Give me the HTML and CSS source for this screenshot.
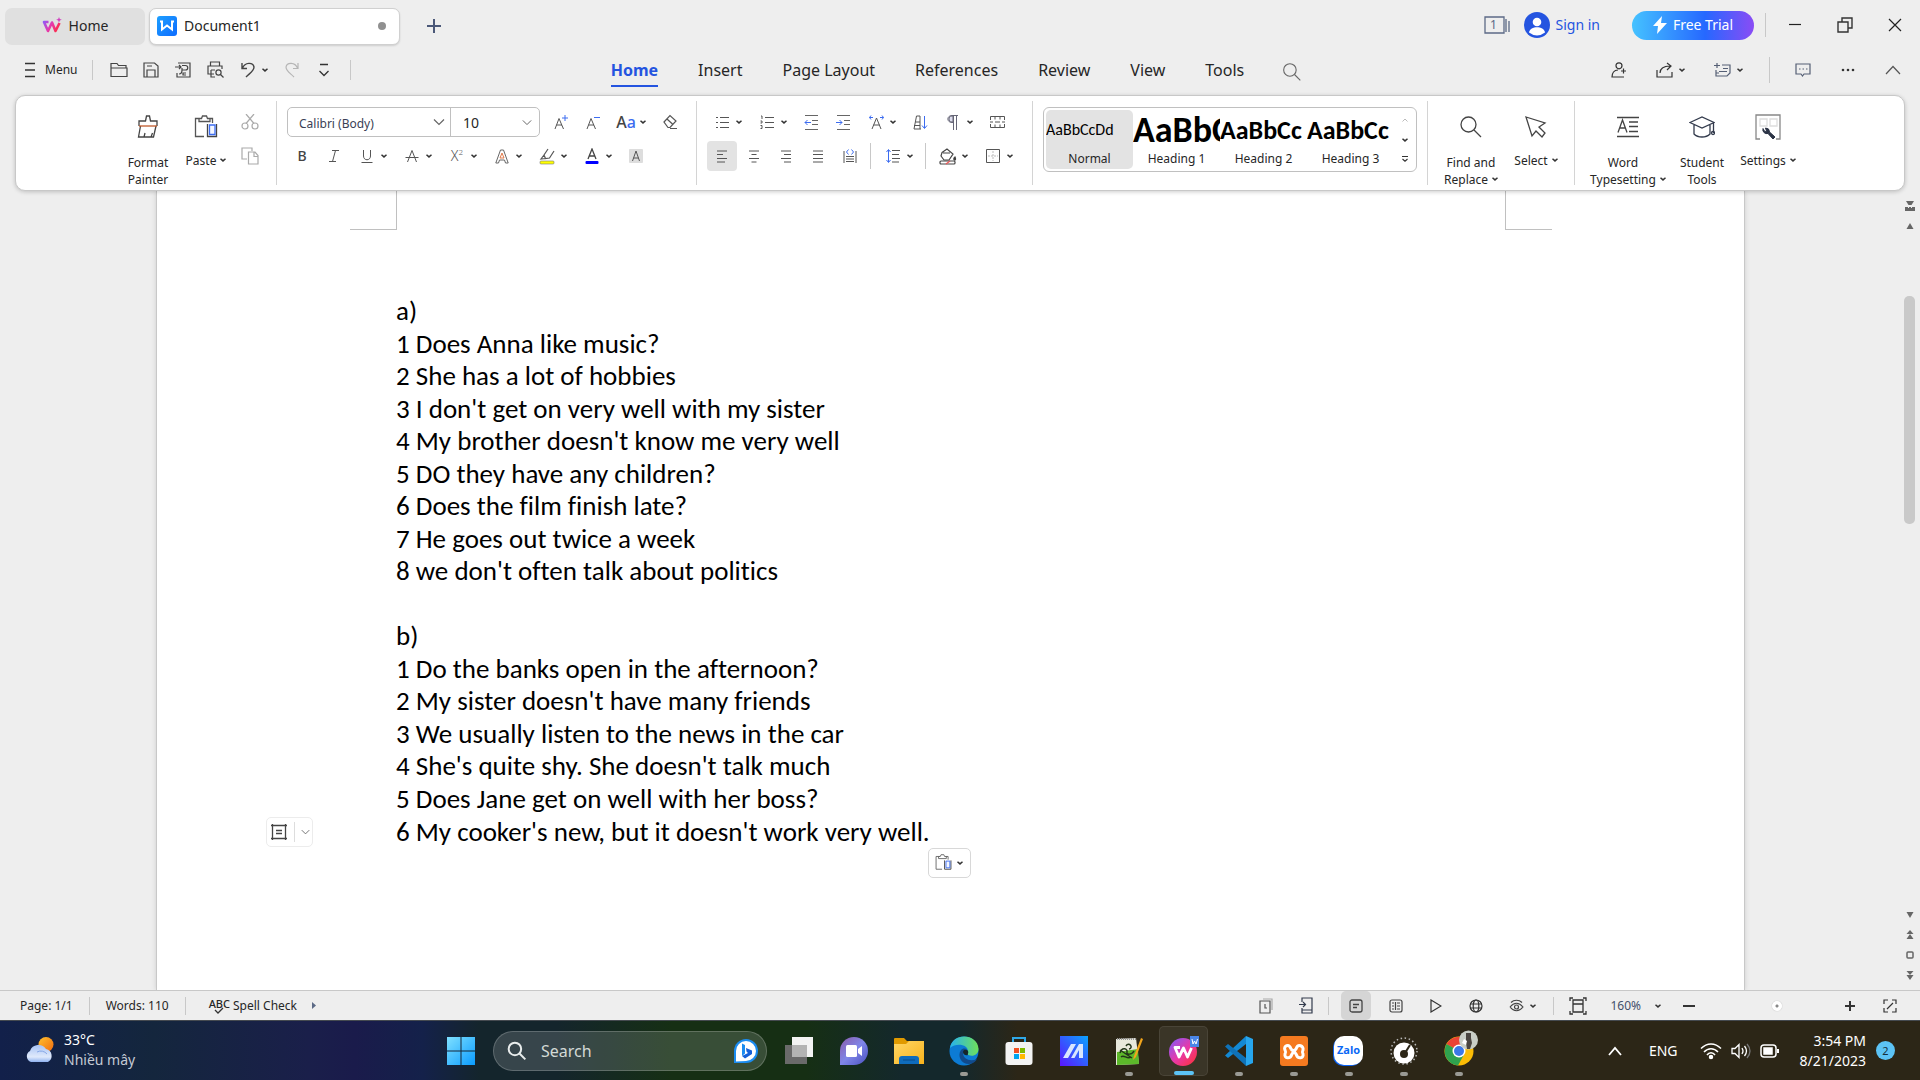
FILE: index.html
```html
<!DOCTYPE html>
<html lang="en">
<head>
<meta charset="utf-8">
<title>Document1</title>
<link rel="stylesheet" href="styles.css">
</head>
<body>
<svg class="defs" aria-hidden="true">
  <defs>
    <linearGradient id="gW" x1="0" y1="0" x2="1" y2="1"><stop offset="0" stop-color="#7a5cff"/><stop offset=".5" stop-color="#e839a8"/><stop offset="1" stop-color="#ff3030"/></linearGradient>
    <linearGradient id="gWb" gradientUnits="userSpaceOnUse" x1="1" y1="4" x2="17" y2="14"><stop offset="0" stop-color="#8a5cff"/><stop offset=".5" stop-color="#e839a8"/><stop offset="1" stop-color="#ff2a3a"/></linearGradient>
    <linearGradient id="gDoc" x1="0" y1="0" x2="1" y2="1"><stop offset="0" stop-color="#1ea0ff"/><stop offset="1" stop-color="#0d6bff"/></linearGradient>
    <linearGradient id="gWin" x1="0" y1="0" x2="1" y2="1"><stop offset="0" stop-color="#7fe0ff"/><stop offset="1" stop-color="#0a9bff"/></linearGradient>
    <linearGradient id="gSun" x1="0" y1="0" x2="1" y2="1"><stop offset="0" stop-color="#ffc12e"/><stop offset="1" stop-color="#f06a10"/></linearGradient>
    <linearGradient id="gCloud" x1="0" y1="0" x2="0" y2="1"><stop offset="0" stop-color="#a9c4f5"/><stop offset=".7" stop-color="#dfe9fb"/><stop offset="1" stop-color="#8fb2f0"/></linearGradient>
    <linearGradient id="gEdge" x1="0" y1="0" x2="1" y2="0"><stop offset="0" stop-color="#27b2ee"/><stop offset="1" stop-color="#6fe05a"/></linearGradient>
    <linearGradient id="gA" x1="0" y1="1" x2="1" y2="0"><stop offset="0" stop-color="#5a14ff"/><stop offset="1" stop-color="#0aa4ff"/></linearGradient>
    <linearGradient id="gChat" x1="0" y1="0" x2="1" y2="1"><stop offset="0" stop-color="#8c5aa8"/><stop offset=".5" stop-color="#7f86e8"/><stop offset="1" stop-color="#4a50c0"/></linearGradient>
    <linearGradient id="gFold" x1="0" y1="0" x2="1" y2="1"><stop offset="0" stop-color="#ffd766"/><stop offset="1" stop-color="#f9b31c"/></linearGradient>
    <symbol id="chev" viewBox="0 0 6 4"><path d="M.5.7 3 2.9 5.500.7" fill="none" stroke="#333" stroke-width="1.500"/></symbol>
    <symbol id="chevL" viewBox="0 0 12 8"><path d="M1 1.500 6 6.500 11 1.500" fill="none" stroke="#666" stroke-width="1.200"/></symbol>
    <symbol id="lens" viewBox="0 0 24 24"><circle cx="9.500" cy="9.500" r="7.500"/><path d="m15 15 7 7"/></symbol>
    <symbol id="clip" viewBox="0 0 24 24"><path d="M7 3.500H1.500v18H10M15 3.500h3.500V8M5 6.500V3.500h2.500L8.500 1h4l1 2.500H16v3z"/><path d="M13.500 9v12.500h9V9" stroke="#444"/><path d="M15.500 10h5.500v9.500h-5.500z" stroke="#3c6cf0" stroke-width="1.300" fill="#f3f6ff"/></symbol>
  </defs>
</svg>

<header class="titlebar">
  <button class="tab">
    <svg width="20" height="18" viewBox="0 0 20 18"><path d="M6.500 5H2l4 9 4-8.500L13.500 14 17.500 6" fill="none" stroke="url(#gWb)" stroke-width="2.600" stroke-linejoin="round"/><path d="m17 0 .8 2 2 .7-2 .8-.8 2-.8-2-2-.8 2-.7z" fill="#d040c0"/></svg>
    <span>Home</span>
  </button>
  <button class="tab tab-doc">
    <svg width="20" height="20" viewBox="0 0 20 20"><rect width="20" height="20" rx="3" fill="url(#gDoc)"/><path d="M3 5.500h2v8l5-4 5 4v-8h2" fill="none" stroke="#fff" stroke-width="2"/></svg>
    <span>Document1</span><i class="dot"></i>
  </button>
  <button class="plus" aria-label="New tab"><svg width="16" height="16" viewBox="0 0 16 16"><path d="M8 1v14M1 8h14" stroke="#4b5878" stroke-width="2"/></svg></button>
  <div class="title-right">
    <button aria-label="Windows" class="winlist"><svg width="26" height="18" viewBox="0 0 26 18" fill="none" stroke="#5c6a86" stroke-width="1.300"><path d="M1 1h19v16H1zM22 3v13M25 5v11"/></svg><span>1</span></button>
    <button class="signin"><svg width="26" height="26" viewBox="0 0 26 26"><circle cx="13" cy="13" r="13" fill="#2454e0"/><circle cx="13" cy="10" r="4.300" fill="#fff"/><path d="M5 20.500c1-7 15-7 16 0q-8 6-16 0" fill="#fff"/></svg><span>Sign in</span></button>
    <button class="trial"><svg width="14" height="18" viewBox="0 0 14 18"><path d="M9 0 0 10h5l-1 8L14 7H8z" fill="#fff"/></svg><span>Free Trial</span></button>
    <i class="vr"></i>
    <button class="win" aria-label="Minimize"><svg width="14" height="14" viewBox="0 0 14 14"><path d="M1 6.500h12" stroke="#222" stroke-width="1.200"/></svg></button>
    <button class="win" aria-label="Restore"><svg width="16" height="16" viewBox="0 0 16 16" fill="none" stroke="#333" stroke-width="1.400"><path d="M1 5h10v10H1zM5 5V1h10v10h-4"/></svg></button>
    <button class="win" aria-label="Close"><svg width="14" height="14" viewBox="0 0 14 14"><path d="m1 1 12 12M13 1 1 13" stroke="#222" stroke-width="1.200"/></svg></button>
  </div>
</header>

<div class="menubar">
  <div class="quick">
    <button class="menu"><svg width="12" height="16" viewBox="0 0 12 16"><path d="M1 1.500h10M1 8h10M1 14.500h10" stroke="#333" stroke-width="1.300"/></svg><span>Menu</span></button>
    <i class="vr"></i>
    <button class="ib" aria-label="Open"><svg width="18" height="16" viewBox="0 0 18 16" fill="none" stroke="#444" stroke-width="1.200"><path d="M1 14.500V1.500h6l1.500 2H16V6M1 6h16v8.500H1z"/></svg></button>
    <button class="ib" aria-label="Save"><svg width="16" height="16" viewBox="0 0 16 16" fill="none" stroke="#444" stroke-width="1.200"><path d="M1 1h10.500L15 4v11H1zM4 15V8h8v7M4 4h5"/></svg></button>
    <button class="ib" aria-label="Export"><svg width="16" height="16" viewBox="0 0 16 16" fill="none" stroke="#444" stroke-width="1.200"><path d="M3 1h12v14H2v-4M0 5h6M4 3l2 2-2 2M7 3.500h3.500a2 2 0 0 1 0 4.500H7v-2M7 8c0 3-1 4-3 4M11 11H8v2h3"/></svg></button>
    <button class="ib" aria-label="Print preview"><svg width="17" height="17" viewBox="0 0 17 17" fill="none" stroke="#444" stroke-width="1.200"><path d="M3.500 5V1h9v4M7 13H1V5h14v3M4 9v7h4M4 9h4"/><circle cx="11.500" cy="11.500" r="2.600"/><path d="m13.500 13.500 3 3"/></svg></button>
    <button class="dd" aria-label="Undo"><svg width="14" height="16" viewBox="0 0 14 16" fill="none" stroke="#444" stroke-width="1.400"><path d="M1 1v5.500h5M1.500 6C4 0 12 0 13 5c0 4-4 6-8 10"/></svg><svg class="c"><use href="#chev"/></svg></button>
    <button class="ib" aria-label="Redo"><svg width="14" height="16" viewBox="0 0 14 16" fill="none" stroke="#b5b5b5" stroke-width="1.200"><path d="M13 1v5.500H8M12.500 6C10 0 2 0 1 5c0 4 4 6 8 10"/></svg></button>
    <button class="ib" aria-label="Customize"><svg width="12" height="14" viewBox="0 0 12 14" fill="none" stroke="#333" stroke-width="1.300"><path d="M2 1.500h8M1.500 8 6 12.500 10.500 8"/></svg></button>
    <i class="vr"></i>
  </div>
  <nav class="tabs">
    <a href="#" class="on">Home</a><a href="#">Insert</a><a href="#">Page Layout</a><a href="#">References</a><a href="#">Review</a><a href="#">View</a><a href="#">Tools</a>
    <button aria-label="Search"><svg width="20" height="20" class="ln" stroke="#666"><use href="#lens"/></svg></button>
  </nav>
  <div class="share">
    <button class="ib" aria-label="Invite"><svg width="16" height="16" viewBox="0 0 16 16" fill="none" stroke="#333" stroke-width="1.200"><circle cx="8" cy="3.800" r="3"/><path d="M7 8c-4 0-6 3-6 7h12M12.500 6.500v5M10 9h5"/></svg></button>
    <button class="dd" aria-label="Share"><svg width="18" height="16" viewBox="0 0 18 16" fill="none" stroke="#333" stroke-width="1.200"><path d="M1 8v7h15v-5M4 11c0-5 4-7 10-7M11 1l4 3-4 4"/></svg><svg class="c"><use href="#chev"/></svg></button>
    <button class="dd" aria-label="Add panel"><svg width="18" height="16" viewBox="0 0 18 16" fill="none" stroke="#555f75" stroke-width="1.200"><path d="M3 1v5M0 3.500h6M8 3h8v8l-3 3H2V8M9 6.500h5M5 9.500h8M2 11h3"/></svg><svg class="c"><use href="#chev"/></svg></button>
    <i class="vr"></i>
    <button class="ib" aria-label="Comments"><svg width="16" height="14" viewBox="0 0 16 14" fill="none" stroke="#555f75" stroke-width="1.200"><path d="M1 1h14v10H9l-1.500 2L6 11H1zM4 6h1.500M7.500 6H9M11 6h1.500"/></svg></button>
    <button class="ib" aria-label="More"><svg width="14" height="4" viewBox="0 0 14 4" fill="#333"><circle cx="2" cy="2" r="1.300"/><circle cx="7" cy="2" r="1.300"/><circle cx="12" cy="2" r="1.300"/></svg></button>
    <button class="ib" aria-label="Collapse ribbon"><svg width="16" height="10" viewBox="0 0 16 10" fill="none" stroke="#555" stroke-width="1.200"><path d="m1 9 7-7.500L15 9"/></svg></button>
  </div>
</div>

<section class="ribbon">
  <div class="group clipboard">
    <button class="big two painter"><svg width="22" height="24" viewBox="0 0 22 24" fill="none" stroke="#444" stroke-width="1.300"><path d="M2 11V6h6.500l1-5h3l1 5H20v5M3.500 11 1.500 22h15l2.500-11M7 22l1-4M14 22l1.500-4"/><path d="M2 11h18" stroke="#c0592a"/></svg><span>Format<br>Painter</span></button>
    <button class="big paste"><svg width="24" height="24" class="ln" stroke="#555"><use href="#clip"/></svg><span>Paste<svg class="c"><use href="#chev"/></svg></span></button>
    <div class="rows">
      <div class="row"><button class="ib" aria-label="Cut"><svg width="18" height="16" viewBox="0 0 18 16" fill="none" stroke="#aaa" stroke-width="1.200"><circle cx="4" cy="12" r="3"/><circle cx="14" cy="12" r="3"/><path d="M5 9.500 13 0M13 9.500 5 0"/></svg></button></div>
      <div class="row"><button class="ib" aria-label="Copy"><svg width="18" height="18" viewBox="0 0 18 18" fill="none" stroke="#aaa" stroke-width="1.200"><path d="M6 12H1V1h10v3M7.500 5H14l3 3.500V17H7.500zM13 5v4.500h4"/></svg></button></div>
    </div>
  </div>
  <div class="group font">
    <div class="rows">
      <div class="row">
        <div class="combo"><input class="fname" aria-label="Font" value="Calibri (Body)"><svg width="12" height="8"><use href="#chevL"/></svg><input class="fsize" aria-label="Font size" value="10"><svg width="10" height="7"><use href="#chevL"/></svg></div>
        <button class="ib" aria-label="Grow font"><svg width="16" height="16" viewBox="0 0 16 16" fill="none" stroke="#555"><path d="m2 15 4-10.500L10.500 15M3.500 11h5.500"/><path d="M12 1v6M9 4h6" stroke="#3c6cf0"/></svg></button>
        <button class="ib" aria-label="Shrink font"><svg width="16" height="16" viewBox="0 0 16 16" fill="none" stroke="#555"><path d="m2 15 4-10.500L10.500 15M3.500 11h5.500"/><path d="M9 3.500h6" stroke="#3c6cf0"/></svg></button>
        <button class="dd" aria-label="Change case"><span class="case">A<em>a</em></span><svg class="c"><use href="#chev"/></svg></button>
        <button class="ib" aria-label="Clear formatting"><svg width="16" height="16" viewBox="0 0 16 16" fill="none" stroke="#555" stroke-width="1.200"><path d="m2 8 6-6.500L14 7l-6 6.500H6zM5 5l6 5.500M8 14.500h7"/></svg></button>
      </div>
      <div class="row">
        <button class="ib t" aria-label="Bold"><b>B</b></button>
        <button class="ib t" aria-label="Italic"><svg width="12" height="12" viewBox="0 0 12 12" fill="none" stroke="#555"><path d="M4 .5h7M1 11.500h7M7.500.5l-3 11"/></svg></button>
        <button class="dd" aria-label="Underline"><svg width="12" height="15" viewBox="0 0 12 15" fill="none" stroke="#555"><path d="M2.500 1v6c0 5 7 5 7 0V1M.5 13.500h11"/></svg><svg class="c"><use href="#chev"/></svg></button>
        <button class="dd" aria-label="Strikethrough"><svg width="14" height="14" viewBox="0 0 14 14" fill="none" stroke="#555"><path d="M2.500 13 7 1.500 11.500 13M.5 8.500h13"/></svg><svg class="c"><use href="#chev"/></svg></button>
        <button class="dd" aria-label="Superscript"><span class="sup">X<sup>2</sup></span><svg class="c"><use href="#chev"/></svg></button>
        <button class="dd" aria-label="Text effects"><svg width="14" height="15" viewBox="0 0 14 15" fill="none" stroke="#666"><path d="M.8 14 5.500 1h3l4.700 13h-2.700l-1-3h-5l-1 3z"/><path d="m5 9 2-5 2 5z" stroke="#e07a4a"/></svg><svg class="c"><use href="#chev"/></svg></button>
        <button class="dd" aria-label="Highlight"><svg width="16" height="17" viewBox="0 0 16 17" fill="none" stroke="#555" stroke-width="1.200"><path d="M9 1 5 7l1.500 3.500 4-.5L15 3M5 7l-3 4 4.500-.5"/><rect x="1" y="13" width="14" height="3" rx="1" fill="#ff0" stroke="#777" stroke-width=".6"/></svg><svg class="c"><use href="#chev"/></svg></button>
        <button class="dd" aria-label="Font color"><svg width="14" height="17" viewBox="0 0 14 17" fill="none" stroke="#444" stroke-width="1.300"><path d="M3 11 7 1l4 10M4.500 8h5"/><rect x=".5" y="13" width="13" height="3" rx="1" fill="#00f" stroke="none"/></svg><svg class="c"><use href="#chev"/></svg></button>
        <button class="ib" aria-label="Character shading"><svg width="16" height="16" viewBox="0 0 16 16" fill="none" stroke="#555"><rect x="1" y="1" width="14" height="14" rx="1" fill="#ddd" stroke="none"/><path d="M4.500 13 8 3l3.500 10M5.500 10h5"/></svg></button>
      </div>
    </div>
  </div>
  <div class="group para">
    <div class="rows">
      <div class="row">
        <button class="dd" aria-label="Bullets"><svg width="14" height="14" viewBox="0 0 14 14" stroke="#555"><path d="M1 2.500h2M1 7.500h2M1 12.500h2M5 2.500h9M5 7.500h9M5 12.500h9"/></svg><svg class="c"><use href="#chev"/></svg></button>
        <button class="dd" aria-label="Numbering"><svg width="14" height="15" viewBox="0 0 14 15" fill="none" stroke="#555"><path d="M1 1h1v3M.5 6H2v2H.5M.5 10.500H2v3H.5M5 2.500h9M5 7.500h9M5 12.500h9"/></svg><svg class="c"><use href="#chev"/></svg></button>
        <button class="ib" aria-label="Decrease indent"><svg width="14" height="15" viewBox="0 0 14 15" fill="none" stroke="#666"><path d="M1 .5h13M8 5.500h6M8 9.500h6M1 14.500h13"/><path d="M7 7.500H1M3.500 5 1 7.500 3.500 10" stroke="#3c6cf0"/></svg></button>
        <button class="ib" aria-label="Increase indent"><svg width="14" height="15" viewBox="0 0 14 15" fill="none" stroke="#666"><path d="M1 .5h13M8 5.500h6M8 9.500h6M1 14.500h13"/><path d="M0 7.500h6M3.500 5 6 7.500 3.500 10" stroke="#3c6cf0"/></svg></button>
        <button class="dd" aria-label="Asian layout"><svg width="15" height="15" viewBox="0 0 15 15" fill="none" stroke="#555"><path d="M3 14 7.500 3 12 14M4.500 10h6"/><path d="M4 2.500H.5M2 .5l-1.500 2 1.500 2M11 2.500h3.500M13 .5l1.500 2-1.500 2" stroke="#3c6cf0"/></svg><svg class="c"><use href="#chev"/></svg></button>
        <button class="ib" aria-label="Sort"><svg width="15" height="15" viewBox="0 0 15 15" fill="none" stroke="#555"><path d="M3.500 1H7v13M3.500 1 1 14M2.500 7H7M1 10.500h6M1 14h7"/><path d="M11.500 1v12M9 10.500l2.500 3 2.500-3" stroke="#3c6cf0"/></svg></button>
        <button class="dd" aria-label="Show marks"><svg width="12" height="15" viewBox="0 0 12 15" fill="none" stroke="#667"><path d="M11 .5H5c-5.500 0-5.500 7 0 7h1M6.500.5V15M9.500.5V15"/><path d="M6 1H5C1 1 1 7 5 7h1z" fill="#dde"/></svg><svg class="c"><use href="#chev"/></svg></button>
        <button class="ib" aria-label="Tabs"><svg width="15" height="12" viewBox="0 0 15 12" fill="none" stroke="#555"><path d="M.5 4V.5h14V4M.5 8v3.500h14V8M5 .5v3M10 .5v3M5 8.500v3M10 8.500v3M0 6h3M5 6h5M12 6h3"/></svg></button>
      </div>
      <div class="row">
        <button class="ib on" aria-label="Align left"><svg width="12" height="13" viewBox="0 0 12 13" stroke="#555"><path d="M1 1h10M1 4.500h6M1 8.500h10M1 12h8"/></svg></button>
        <button class="ib" aria-label="Center"><svg width="12" height="13" viewBox="0 0 12 13" stroke="#555"><path d="M1 1h10M3.500 4.500h5M1 8.500h10M3.500 12h5"/></svg></button>
        <button class="ib" aria-label="Align right"><svg width="12" height="13" viewBox="0 0 12 13" stroke="#555"><path d="M1 1h10M4 4.500h7M1 8.500h10M4 12h7"/></svg></button>
        <button class="ib" aria-label="Justify"><svg width="12" height="13" viewBox="0 0 12 13" stroke="#555"><path d="M1 1h10M1 4.500h10M1 8.500h10M1 12h10"/></svg></button>
        <button class="ib" aria-label="Distribute"><svg width="14" height="14" viewBox="0 0 14 14" fill="none" stroke="#555"><path d="M1 2v12M13 2v12M3 7.500h8M3 12.500h8M3 10h8"/><path d="M5.500.5 3.500 3l2 2.500M8.500.5l2 2.500-2 2.500" stroke="#3c6cf0"/></svg></button>
        <i class="vr"></i>
        <button class="dd" aria-label="Line spacing"><svg width="14" height="14" viewBox="0 0 14 14" fill="none" stroke="#555"><path d="M6 1.500h8M6 5.500h7M6 9.500h8M6 13h7"/><path d="M2.500 1v12M.5 3l2-2.500 2 2.500M.5 11l2 2.500 2-2.500" stroke="#3c6cf0"/></svg><svg class="c"><use href="#chev"/></svg></button>
        <i class="vr"></i>
        <button class="dd" aria-label="Shading"><svg width="18" height="17" viewBox="0 0 18 17" fill="none" stroke="#444" stroke-width="1.200"><path d="M3 4.500 8 1l6 5-4 6H5L2 8zM4 5h7"/><path d="M16 9c2 4-2 4-1 1z" fill="#333"/><rect x="1" y="13" width="15" height="3" rx="1"/><path d="m7 16 4-3" stroke="#e55"/></svg><svg class="c"><use href="#chev"/></svg></button>
        <button class="dd" aria-label="Borders"><svg width="14" height="14" viewBox="0 0 14 14" fill="none" stroke="#555"><path d="M.5.5h13v13H.5z"/><path d="M7 2v10M2 7h10" stroke="#bbb" stroke-dasharray="2 1"/></svg><svg class="c"><use href="#chev"/></svg></button>
      </div>
    </div>
  </div>
  <div class="group styles">
    <div class="gallery">
      <button class="style on"><span class="s0">AaBbCcDd</span><small>Normal</small></button>
      <button class="style"><span class="s1">AaBbC</span><small>Heading 1</small></button>
      <button class="style"><span class="s2">AaBbCc</span><small>Heading 2</small></button>
      <button class="style"><span class="s3">AaBbCc</span><small>Heading 3</small></button>
      <div class="gscroll">
        <button aria-label="Previous styles"><svg width="6" height="4" viewBox="0 0 6 4"><path d="m.5 3.500 2.500-2.500 2.500 2.500" fill="none" stroke="#bbb"/></svg></button>
        <button aria-label="Next styles"><svg class="c"><use href="#chev"/></svg></button>
        <button aria-label="All styles"><svg width="6" height="6" viewBox="0 0 6 6"><path d="M0 .5h6M.5 3 3 5.200 5.500 3" fill="none" stroke="#333" stroke-width="1.100"/></svg></button>
      </div>
    </div>
  </div>
  <div class="group editing">
    <button class="big two"><svg width="24" height="24" class="ln" stroke="#444"><use href="#lens"/></svg><span>Find and<br>Replace<svg class="c"><use href="#chev"/></svg></span></button>
    <button class="big sel"><svg width="22" height="22" viewBox="0 0 22 22" fill="none" stroke="#444" stroke-width="1.300"><path d="m1 1 19 6-6 4 6 6-3 4-6-6-4 5z"/></svg><span>Select<svg class="c"><use href="#chev"/></svg></span></button>
  </div>
  <div class="group tools">
    <button class="big two"><svg width="24" height="22" viewBox="0 0 24 22" fill="none" stroke="#444" stroke-width="1.300"><path d="M1 1.500h22M1 20.500h22M13 6h9M13 10.500h9M13 15.500h9M2 16.500 6.500 4 11 16.500M3.500 12h6"/></svg><span><span class="lead">Word</span>Typesetting<svg class="c"><use href="#chev"/></svg></span></button>
    <button class="big two"><svg width="26" height="22" viewBox="0 0 26 22" fill="none" stroke="#333b4d" stroke-width="1.300"><path d="M1 6.500 13 1l12 5.500L13 12zM5 9v9c4 4 12 4 16 0V9M24.500 7v10"/><circle cx="24" cy="17" r="1.500"/></svg><span>Student<br>Tools</span></button>
    <button class="big"><svg width="26" height="26" viewBox="0 0 26 26" fill="none" stroke="#888" stroke-width="1.300"><path d="M5 25H1V1h24v24h-4"/><path d="M5 5h7v7H5zM15 5h7v7h-7z" stroke="#ddd"/><path d="M8 14.500a4 4 0 0 0 5 5l5 5.500 2-2-5.500-5a4 4 0 0 0-4-4l1 3-1.500 1z" fill="#2b3345" stroke="#2b3345" stroke-width="1"/></svg><span>Settings<svg class="c"><use href="#chev"/></svg></span></button>
  </div>
</section>

<main class="work">
  <article class="page">
    <div class="marks"><i class="ml"></i><i class="mr"></i></div>
    <div class="text">
      <p>a)</p>
      <p>1 Does Anna like music?</p>
      <p>2 She has a lot of hobbies</p>
      <p>3 I don't get on very well with my sister</p>
      <p>4 My brother doesn't know me very well</p>
      <p>5 DO they have any children?</p>
      <p>6 Does the film finish late?</p>
      <p>7 He goes out twice a week</p>
      <p>8 we don't often talk about politics</p>
      <p>&nbsp;</p>
      <p>b)</p>
      <p>1 Do the banks open in the afternoon?</p>
      <p>2 My sister doesn't have many friends</p>
      <p>3 We usually listen to the news in the car</p>
      <p>4 She's quite shy. She doesn't talk much</p>
      <p>5 Does Jane get on well with her boss?</p>
      <p class="last">6 My cooker's new, but it doesn't work very well.
        <button class="float pmark" aria-label="Paragraph layout"><svg width="18" height="18" viewBox="0 0 18 18" fill="none" stroke="#444" stroke-width="1.300"><path d="M2.500 1v16M15.500 1v16M1 2.500h16M1 15.500h16M6 7.500h6M6 10.500h6"/></svg><i class="vr"></i><svg width="9" height="6"><use href="#chevL"/></svg></button>
        <button class="float pbtn" aria-label="Paste options"><svg width="17" height="17" class="ln" stroke="#666"><use href="#clip"/></svg><svg class="c"><use href="#chev"/></svg></button>
      </p>
    </div>
  </article>
  <aside class="rail">
    <button aria-label="Ruler"><svg width="10" height="10" viewBox="0 0 10 10" fill="#666"><path d="M1 0h8L6.500 4h-3zM0 10V6h3v1h1V6h2v1h1V6h3v4z"/></svg></button>
    <button aria-label="Scroll up"><svg width="8" height="8" viewBox="0 0 8 8" fill="#666"><path d="m4 1 3.500 6h-7z"/></svg></button>
    <i class="thumb"></i>
    <button aria-label="Scroll down"><svg width="8" height="8" viewBox="0 0 8 8" fill="#666"><path d="M4 7 .5 1h7z"/></svg></button>
    <button aria-label="Previous page"><svg width="8" height="10" viewBox="0 0 8 10" fill="#666"><path d="m4 0 3.500 4h-7zM4 4l3.500 5h-7z"/></svg></button>
    <button aria-label="Browse object"><svg width="8" height="8" viewBox="0 0 8 8" fill="none" stroke="#666" stroke-width="1.500"><rect x="1" y="1" width="6" height="6" rx="1"/></svg></button>
    <button aria-label="Next page"><svg width="8" height="10" viewBox="0 0 8 10" fill="#666"><path d="M4 5 .5 1h7zM4 10 .5 5h7z"/></svg></button>
  </aside>
</main>

<footer class="status">
  <span class="st">Page: 1/1</span><i class="vr"></i><span class="st">Words: 110</span><i class="vr"></i>
  <button class="spell"><span class="abc">ABC<svg width="10" height="7" viewBox="0 0 10 7"><path d="m1 3 3 3 5-5" fill="none" stroke="#333" stroke-width="1.300"/></svg></span><span>Spell Check</span><svg class="tri" width="5" height="7" viewBox="0 0 5 7"><path d="m1 0 4 3.500L1 7z" fill="#5c6a86"/></svg></button>
  <div class="views">
    <button class="vb" aria-label="History"><svg width="14" height="16" viewBox="0 0 14 16" fill="none" stroke="#555" stroke-width="1.200"><path d="M1 3h10v12H1zM6 6v4h2"/><path d="M4 1h9v11" stroke="#aaa"/></svg></button>
    <button class="vb" aria-label="Send to phone"><svg width="14" height="17" viewBox="0 0 14 17" fill="none" stroke="#333b4d" stroke-width="1.200"><path d="M3 5V1h10v15H3v-5M0 7.500h6M4 5l2.500 2.500L4 10M3 13h10"/></svg></button>
    <i class="vr"></i>
    <button class="vb on" aria-label="Page view"><svg width="14" height="14" viewBox="0 0 14 14" fill="none" stroke="#444" stroke-width="1.300"><rect x="1" y="1" width="12" height="12" rx="2"/><path d="M4 5.500h6M4 8.500h4"/></svg></button>
    <button class="vb" aria-label="Outline view"><svg width="14" height="14" viewBox="0 0 14 14" fill="none" stroke="#444" stroke-width="1.200"><rect x="1" y="1" width="12" height="12" rx="2"/><path d="M3 4h2M3 7h2M3 10h2M6.500 3v8M8 4h3M8 7h3M8 10h3"/></svg></button>
    <button class="vb" aria-label="Reading view"><svg width="12" height="14" viewBox="0 0 12 14" fill="none" stroke="#333" stroke-width="1.200"><path d="m1 1 10 6-10 6z"/></svg></button>
    <button class="vb" aria-label="Web view"><svg width="14" height="14" viewBox="0 0 14 14" fill="none" stroke="#333" stroke-width="1.200"><circle cx="7" cy="7" r="6"/><ellipse cx="7" cy="7" rx="2.800" ry="6"/><path d="M1 5h12M1 9h12"/></svg></button>
    <button class="dd" aria-label="Eye protection"><svg width="15" height="14" viewBox="0 0 15 14" fill="none" stroke="#444" stroke-width="1.200"><path d="M1 8c4-5 9-5 13 0-4 5-9 5-13 0M2 3.500c3-3 8-3 11 0"/><circle cx="7.500" cy="8" r="2"/></svg><svg class="c"><use href="#chev"/></svg></button>
    <i class="vr"></i>
    <button class="vb" aria-label="Fit page"><svg width="18" height="18" viewBox="0 0 18 18" fill="none" stroke="#333" stroke-width="1.300"><path d="M4 3h10v12H4zM4 7h10M1 4V1h3M14 1h3v3M17 14v3h-3M4 17H1v-3"/></svg></button>
    <button class="zoom"><span>160%</span><svg class="c"><use href="#chev"/></svg></button>
    <button class="vb" aria-label="Zoom out"><svg width="14" height="4" viewBox="0 0 14 4"><path d="M1 2h12" stroke="#333" stroke-width="2"/></svg></button>
    <input class="slider" type="range" min="10" max="300" value="175" aria-label="Zoom">
    <button class="vb" aria-label="Zoom in"><svg width="12" height="12" viewBox="0 0 12 12"><path d="M1 6h10M6 1v10" stroke="#333" stroke-width="2"/></svg></button>
    <button class="vb" aria-label="Full screen"><svg width="14" height="14" viewBox="0 0 14 14" fill="none" stroke="#333" stroke-width="1.200"><path d="M1 5V1h4M9 1h4v4M13 9v4H9M5 13H1V9M4 10l6-6"/></svg></button>
  </div>
</footer>

<div class="taskbar">
  <button class="weather"><svg width="32" height="28" viewBox="0 0 32 28"><circle cx="22" cy="8.500" r="7.500" fill="url(#gSun)"/><path d="M7 26a6 6 0 0 1-1-11 9 9 0 0 1 16-2 7 7 0 0 1 2 13z" fill="url(#gCloud)"/><path d="M13 16a8 8 0 0 1 10 2" stroke="#88a8e6" fill="none"/></svg><span>33°C<small>Nhiều mây</small></span></button>
  <div class="apps">
    <button class="start" aria-label="Start"><svg width="30" height="30" viewBox="0 0 30 30" fill="url(#gWin)"><path d="M1 1h13.500v13.500H1zM15.500 1H29v13.500H15.500zM1 15.500h13.500V29H1zM15.500 15.500H29V29H15.500z"/></svg></button>
    <label class="search"><svg width="20" height="20" class="ln thick" stroke="#e8ecec"><use href="#lens"/></svg><input type="text" placeholder="Search" aria-label="Search"><svg width="26" height="26" viewBox="0 0 26 26"><path d="M1 25V13A12 12 0 1 1 13 25z" fill="#1b8cf0"/><path d="M3 23.500V13a10 10 0 1 1 10 10z" fill="#fff"/><path d="M9 5.500 12 7v8.500L9 18z" fill="#1b8cf0"/><path d="m13 10 6 2.500V16l-7 4.500L9 18l6-3-1.500-1.500z" fill="#1560d8"/></svg></label>
    <button class="app" aria-label="Task view"><svg width="30" height="30" viewBox="0 0 30 30"><path d="M1 9h22v19H1z" fill="#6a6a6a"/><path d="M8 1h21v20H8z" fill="#f3f3f3"/><path d="M8 9h15v12H8z" fill="#b3b3b3"/></svg></button>
    <button class="app" aria-label="Chat"><svg width="30" height="30" viewBox="0 0 30 30"><path d="M1 29V15a14 14 0 1 1 14 14z" fill="url(#gChat)"/><rect x="7" y="9" width="11" height="12" rx="1.500" fill="#fff"/><path d="m19 13 4-3v10l-4-3z" fill="#fff"/></svg></button>
    <button class="app" aria-label="File Explorer"><svg width="30" height="30" viewBox="0 0 30 30"><path d="M0 3q0-1 1-1h9l3 3h10v6H0z" fill="#e09a00"/><path d="M0 8h12l3-3h15v23H0z" fill="url(#gFold)"/><path d="M5 28v-5q0-3 3-3h14q3 0 3 3v5z" fill="#0f6cbd"/><path d="M9 24h12" stroke="#0a4a8a"/></svg></button>
    <button class="app run" aria-label="Edge"><svg width="30" height="30" viewBox="0 0 30 30"><circle cx="15" cy="15" r="14.500" fill="#0c7bd4"/><path d="M1 12C3-4 29-3 29.500 13c0 6-6 8-10 6-3-1 0-3-1-6-2-5-12-6-17.500-1" fill="url(#gEdge)"/><path d="M12 14c-4 6 0 14 8 14 4 0 7-3 8-5-7 3-14 0-14-6 0-2 1-3 3-4-2-1-4 0-5 1" fill="#114a8b"/><path d="M14 16c0-2 3-4 5-1 1 2-1 3 0 4-3 1-5-1-5-3" fill="#15252b"/></svg></button>
    <button class="app" aria-label="Store"><svg width="30" height="30" viewBox="0 0 30 30"><path d="M9 7V2h12v5" fill="none" stroke="#2fa8e8" stroke-width="2"/><rect x="1.500" y="6" width="27" height="23" rx="3" fill="#f3f3f3"/><path d="M10 12h5v5h-5z" fill="#f25022"/><path d="M16 12h5v5h-5z" fill="#7fba00"/><path d="M10 18h5v5h-5z" fill="#00a4ef"/><path d="M16 18h5v5h-5z" fill="#ffb900"/></svg></button>
    <button class="app" aria-label="MyASUS"><svg width="30" height="30" viewBox="0 0 30 30"><path d="M1 0h28v30H1z" fill="url(#gA)"/><path d="M4 22 12 8h5L9 22zM12 22l8-14h4v14h-4v-8l-4.500 8z" fill="#d8e6ff"/></svg></button>
    <button class="app run" aria-label="Notepad++"><svg width="30" height="30" viewBox="0 0 30 30"><path d="m2 3 20-1 3 26-23 1z" fill="#e8e8dc"/><path d="M3 16 24 13l1 15-22 1z" fill="#5cb82a"/><path d="M3 3h20" stroke="#999" stroke-dasharray="1 1" stroke-width="2"/><path d="M6 17c2-7 8-4 7-1s5 3 7-1M12 10c3-5 8 2 3 3M6 14l12 8M7 21c3-3 6 3 10 0" fill="none" stroke="#23351a" stroke-width="1.500"/><path d="m20 20 7-18 2 1-7 18-3 3z" fill="#f2a51c"/></svg></button>
    <button class="app run active" aria-label="WPS Office"><svg width="32" height="32" viewBox="0 0 32 32"><circle cx="15" cy="17" r="14" fill="url(#gW)"/><path d="M12 12.500H7l4 9.500 4.500-9L19.500 22l4-9" fill="none" stroke="#fff" stroke-width="2.800" stroke-linejoin="round"/><path d="M22 1h9v11h-9z" fill="#4a86e8"/><path d="m24 4 1 5 1.500-3L28 9l1.500-5" stroke="#fff" fill="none"/></svg></button>
    <button class="app run" aria-label="VS Code"><svg width="30" height="30" viewBox="0 0 30 30"><path d="M22 0v8L4 22l-3-2.500z" fill="#1389d4"/><path d="M22 30v-8L4 8l-3 2.500z" fill="#0f72b8"/><path d="m22 0 7 3v24l-7 3z" fill="#27a6ee"/></svg></button>
    <button class="app run" aria-label="XAMPP"><svg width="30" height="30" viewBox="0 0 30 30"><rect x="1" width="28" height="30" rx="3" fill="#f57a20"/><path d="M12 13c-2-6-8-3-6 1 1 2 1 2 0 4-1 4 5 6 7 0 1-2 3-2 4 0 2 6 8 4 7 0-1-2-1-2 0-4 1-4-5-7-7-1-1 2-4 2-5 0" fill="none" stroke="#fff" stroke-width="3"/></svg></button>
    <button class="app run" aria-label="Zalo"><span class="zalo">Zalo</span></button>
    <button class="app run" aria-label="Clock"><svg width="30" height="30" viewBox="0 0 30 30"><circle cx="15" cy="15" r="13" fill="none" stroke="#bbb" stroke-width="1.500" stroke-dasharray="1.500 2.600"/><circle cx="15" cy="17" r="10.500" fill="#fff"/><circle cx="15" cy="18" r="4" fill="#2c2617"/><path d="m16 17 5-8" stroke="#2c2617" stroke-width="2"/></svg></button>
    <button class="app run" aria-label="Chrome"><svg width="38" height="44" viewBox="0 0 38 44"><circle cx="19" cy="22" r="14.500" fill="#fbbc05"/><path d="M19 22 6.500 15a14.500 14.500 0 0 1 25 0z" fill="#ea4335"/><path d="M19 22 6.500 15a14.500 14.500 0 0 0 11.500 21.500l6-11z" fill="#2fa24f"/><circle cx="19" cy="22" r="6.500" fill="#fff"/><circle cx="19" cy="22" r="5" fill="#3b78e7"/><circle cx="28.500" cy="11" r="9.500" fill="#c9cec6"/><path d="M26 4h5v5l1 5-2 6h-3l-1-6z" fill="#4a4540"/><path d="m24 10 3 2-1 4-4-2z" fill="#fff"/></svg></button>
  </div>
  <div class="tray">
    <button class="up" aria-label="Hidden icons"><svg width="14" height="10" viewBox="0 0 14 10"><path d="m1 9 6-7 6 7" fill="none" stroke="#fff" stroke-width="1.800"/></svg></button>
    <button class="lang">ENG</button>
    <button class="net" aria-label="Network, volume and battery">
      <svg width="22" height="18" viewBox="0 0 22 18" fill="none" stroke="#fff" stroke-width="1.500"><path d="M1 6.500c6-6 14-6 20 0M4 10c4-4.500 10-4.500 14 0M7 13c2-3 6-3 8 0"/><circle cx="11" cy="15" r="1.500" fill="#fff"/></svg>
      <svg width="20" height="18" viewBox="0 0 20 18" fill="none" stroke="#fff" stroke-width="1.300"><path d="M1 6.500h3l4-4v13l-4-4H1zM11 6q2 3 0 6M13.500 4q4 5 0 10"/><path d="M16 2q6 7 0 14" stroke="#777"/></svg>
      <svg width="20" height="14" viewBox="0 0 20 14" fill="none" stroke="#fff" stroke-width="1.500"><rect x="1" y="1" width="15" height="12" rx="3"/><path d="M4 4h8v6H4z" fill="#fff"/><path d="M18 5v4" stroke-width="2"/></svg>
    </button>
    <button class="clock">3:54 PM<br>8/21/2023</button>
    <span class="count">2</span>
  </div>
</div>
</body>
</html>
```
FILE: styles.css
```css
* { box-sizing: border-box; }
html, body { height: 100%; }
body {
  margin: 0;
  display: flex;
  flex-direction: column;
  background: #eee;
  color: #262626;
  font: 12px/16px "Noto Sans", "Open Sans", sans-serif;
  overflow: hidden;
}
button, input {
  font: inherit;
  color: inherit;
  background: none;
  border: 0;
  padding: 0;
  margin: 0;
}
button { display: flex; align-items: center; justify-content: center; flex: none; }
svg { flex: none; display: block; }
.defs { position: absolute; width: 0; height: 0; }
.c { width: 6px; height: 4px; }
.ln { fill: none; stroke-width: 1.3; }
.thick { stroke-width: 2.4; }
.vr { flex: none; width: 1px; height: 20px; background: #c8c8c8; }

/* Icon buttons: plain, and with a drop-down arrow */
.ib { width: 32px; height: 30px; }
.dd { width: 45px; height: 30px; display: grid; grid-template-columns: 28px 6px; justify-content: start; padding-left: 3px; justify-items: center; }
.ib.on { background: #e3e3e3; border-radius: 4px; width: 30px; margin: 0 1px 0 2px; }

/* Title bar */
.titlebar { display: flex; align-items: center; height: 52px; padding: 0 0 0 5px; font-size: 14px; line-height: 20px; }
.tab { width: 140px; height: 37px; gap: 7px; border-radius: 7px; background: #e0e0e0; }
.tab-doc { width: 251px; margin-left: 4px; padding: 0 13px 0 7px; justify-content: flex-start; background: #fff; border: 1px solid #d0d0d0; box-shadow: 0 1px 2px #0002; }
.dot { width: 8px; height: 8px; border-radius: 50%; background: #909090; margin-left: auto; }
.plus { width: 68px; height: 37px; }
.title-right { display: flex; align-items: center; margin-left: auto; padding-bottom: 2px; }
.winlist { display: grid; margin-right: 14px; }
.winlist > * { grid-area: 1 / 1; }
.winlist span { width: 20px; font-size: 12px; line-height: 18px; color: #5c6a86; }
.signin { gap: 6px; color: #2454e0; margin-right: 32px; }
.trial { width: 122px; height: 29px; border-radius: 15px; gap: 6px; color: #fff; background: linear-gradient(90deg, #45c2ff, #2668ff 60%, #8a4cf5); margin-right: 11px; }
.title-right .vr { height: 24px; margin-right: 4px; }
.win { width: 50px; height: 30px; }

/* Menu row */
.menubar { display: grid; grid-template-columns: 1fr auto 1fr; align-items: center; height: 43px; padding: 0 11px 8px 24px; }
.quick, .share { display: flex; align-items: center; }
.menu { gap: 9px; font-size: 12px; margin-right: 15px; }
.quick .vr:first-of-type { margin-right: 10px; }
.quick .vr:last-child { margin-left: 10px; }
.tabs { display: flex; align-items: center; gap: 40px; font-size: 16px; line-height: 22px; padding-right: 20px; }
.tabs a { color: #262626; text-decoration: none; border-bottom: 2px solid transparent; padding-top: 6px; height: 34px; }
.tabs a.on { color: #2454e0; font-weight: 700; border-color: #2454e0; }
.tabs button { padding-top: 4px; margin-left: -2px; }
.share { justify-content: flex-end; }
.share .dd { margin-left: 13px; }
.share .vr { height: 26px; margin: 0 17px 0 18px; }
.share .ib + .ib { margin-left: 13px; }

/* Ribbon */
.ribbon {
  display: flex;
  position: relative;
  z-index: 1;
  height: 96px;
  margin: 0 15px;
  padding: 5px 0;
  background: #fff;
  border: 1px solid #c8c8c8;
  border-radius: 10px;
  box-shadow: 0 1px 4px #0003;
}
.group { display: flex; flex: none; border-right: 1px solid #d4d4d4; }
.group:last-child { border: 0; }
.rows { display: flex; flex-direction: column; gap: 4px; padding-top: 6px; }
.row { display: flex; align-items: center; height: 30px; }
.row .vr { height: 26px; margin: 0 5px 0 4px; }
.big { flex-direction: column; justify-content: flex-start; padding-top: 13px; }
.big > svg { height: 26px; }
.big > span { line-height: 17px; margin-top: 12px; }
.big.two > span { margin-top: 14px; }
.big .c { display: inline-block; margin: 0 0 3px 4px; }
.lead { display: block; padding-right: 10px; }
.clipboard { width: 261px; padding-left: 102px; }
.painter { width: 60px; }
.paste { width: 56px; }
.font { width: 420px; padding-left: 9px; }
.combo { display: flex; align-items: center; width: 253px; height: 30px; margin: 0 5px 0 1px; border: 1px solid #c0c0c0; border-radius: 5px; padding-right: 7px; }
.combo input { min-width: 0; height: 28px; }
.fname { width: 145px; padding: 2px 0 0 11px; color: #3a3f55; }
.fsize { flex: 1; border-left: 1px solid #c0c0c0; margin-left: 5px; padding: 0 0 0 12px; font-size: 14px; }
.case { font: 500 16px/20px "Noto Sans", sans-serif; color: #444; }
.case em { font-style: normal; color: #3c6cf0; }
.t { font-size: 14px; }
.t b { font-weight: 500; color: #444; }
.sup { font-size: 14px; color: #555; font-weight: 300; }
.sup sup { font-size: 8px; line-height: 8px; vertical-align: 6px; }
.para { width: 336px; padding-left: 8px; }
.styles { width: 395px; padding: 6px 0 0 10px; }
.gallery { display: flex; width: 374px; height: 65px; padding: 2px; border: 1px solid #c0c0c0; border-radius: 6px; }
.style { width: 87px; flex-direction: column; justify-content: flex-end; padding-bottom: 1px; align-items: stretch; overflow: hidden; }
.style.on { background: #e3e3e3; border-radius: 5px; }
.style span { display: block; flex: 1; font-family: Carlito, Lato, sans-serif; color: #000; text-align: left; white-space: nowrap; line-height: 40px; overflow: hidden; }
.style small { font-size: 12px; line-height: 18px; text-align: center; }
.style .s0 { font-size: 16px; }
.style .s1 { font-size: 36px; font-weight: 700; }
.style .s2, .style .s3 { font-size: 26px; font-weight: 700; }
.gscroll { display: flex; flex-direction: column; flex: 1; }
.gscroll button { flex: 1; padding-left: 2px; }
.editing { width: 147px; padding-left: 4px; }
.editing .big { width: 78px; }
.editing .sel { width: 52px; }
.tools { padding-left: 12px; }
.tools .big { width: 82px; }
.tools .big + .big { width: 66px; }

/* Document area */
.work { flex: 1; min-height: 0; display: flex; padding-left: 156px; overflow: hidden; }
.page { flex: 1; background: #fff; border: solid #c8c8c8; border-width: 0 1px; box-shadow: 0 0 5px #0002; }
.marks { display: flex; justify-content: space-between; padding: 0 192px 0 193px; }
.marks i { width: 47px; height: 39px; border-bottom: 1px solid #c0c0c0; }
.ml { border-right: 1px solid #c0c0c0; }
.mr { border-left: 1px solid #c0c0c0; }
.text { padding: 65px 239px 0; color: #000; font-family: Carlito, Lato, sans-serif; font-size: 27px; line-height: 1.205; font-variant-ligatures: none; }
.text p { margin: 0; }
.last { position: relative; width: fit-content; }
.float { position: absolute; background: #fff; border: 1px solid #d8d8d8; border-radius: 5px; }
.pmark { left: -130px; top: 1px; width: 47px; height: 30px; gap: 6px; border-color: #ececec; }
.pmark .vr { background: #ddd; }
.pbtn { left: 100%; top: 32px; width: 43px; height: 30px; gap: 5px; margin-left: -2px; }
.rail { flex: none; width: 175px; display: flex; flex-direction: column; align-items: flex-end; padding: 5px 5px 5px 0; }
.rail button { width: 11px; height: 20px; }
.thumb { width: 11px; height: 228px; border-radius: 5px; background: #c9c9c9; margin: 60px 0 auto; }

/* Status bar */
.status { flex: none; display: flex; align-items: center; height: 30px; border-top: 1px solid #c8c8c8; padding: 0 10px 0 20px; }
.status > .vr { height: 18px; margin: 0 16px; }
.spell { margin-left: 7px; gap: 3px; }
.abc { display: flex; flex-direction: column; align-items: center; font: 500 11px/11px "Noto Sans", sans-serif; }
.abc svg { margin-top: -2px; }
.tri { margin-left: 11px; }
.views { display: flex; align-items: center; margin-left: auto; }
.views > .vr { height: 18px; margin: 0 3px 0 2px; }
.vb { width: 40px; height: 29px; }
.vb.on { width: 30px; margin: 0 5px 0 9px; border-radius: 5px; background: #d5d5d5; }
.views .dd { margin-left: 3px; }
.views .dd + .vr { margin: 0 4px 0 9px; }
.zoom { gap: 14px; padding: 0 8px 0 12px; color: #44506a; }
.slider { appearance: none; width: 121px; height: 14px; }
.slider::-webkit-slider-thumb { appearance: none; width: 10px; height: 10px; border-radius: 50%; background: radial-gradient(#888 0 1px, #fff 2px); box-shadow: 0 0 1px #0006; }

/* Taskbar */
.taskbar {
  flex: none;
  position: relative;
  display: flex;
  align-items: center;
  height: 60px;
  border-top: 1px solid #454a50;
  background: linear-gradient(90deg, #12204a, #14263d 8%, #1a1f4a 16%, #1a1b4b 18.500%, #14214a 22%, #14252c 25%, #14252c 29%, #162f14 35%, #162f14 42%, #14282c 47%, #14282c 50%, #2c2617 53%, #2c2617);
  color: #fff;
  font-size: 14px;
  line-height: 20px;
}
.weather { gap: 8px; margin-left: 24px; padding-bottom: 2px; text-align: left; width: 138px; justify-content: flex-start; }
.weather small { display: block; font-size: 14px; color: #c4cad4; }
.apps { display: flex; align-items: center; margin: 0 auto 0 279px; }
.start { width: 40px; height: 40px; margin-right: 12px; }
.search { display: flex; align-items: center; width: 274px; height: 40px; padding: 0 7px 0 13px; border: 1px solid #fff3; border-radius: 20px; background: #ffffff26; margin-right: 4px; }
.search input { flex: 1; min-width: 0; padding: 0 0 0 14px; font-size: 16px; }
.search input::placeholder { color: #d3dad6; opacity: 1; }
.app { position: relative; width: 49px; height: 50px; margin: 0 3px; border-radius: 5px; }
.run::after { content: ""; position: absolute; bottom: 0; width: 8px; height: 4px; border-radius: 2px; background: #9a9a94; }
.active { background: #ffffff12; border: 1px solid #ffffff14; }
.active::after { width: 20px; background: #5cc3f5; }
.zalo { width: 29px; height: 29px; border-radius: 10px; background: #fff; box-shadow: -1px 1px 0 #0a62f5; color: #0a68f5; font: 700 11px/28px "Open Sans", sans-serif; }
.tray { display: flex; align-items: center; padding-right: 25px; }
.up { margin-right: 27px; }
.lang { margin-right: 22px; }
.net { gap: 9px; margin-right: 20px; }
.clock { display: block; text-align: right; }
.count { width: 19px; height: 19px; margin-left: 10px; border-radius: 50%; background: #5cc3f5; color: #16303c; font-size: 11px; line-height: 19px; text-align: center; }
```
